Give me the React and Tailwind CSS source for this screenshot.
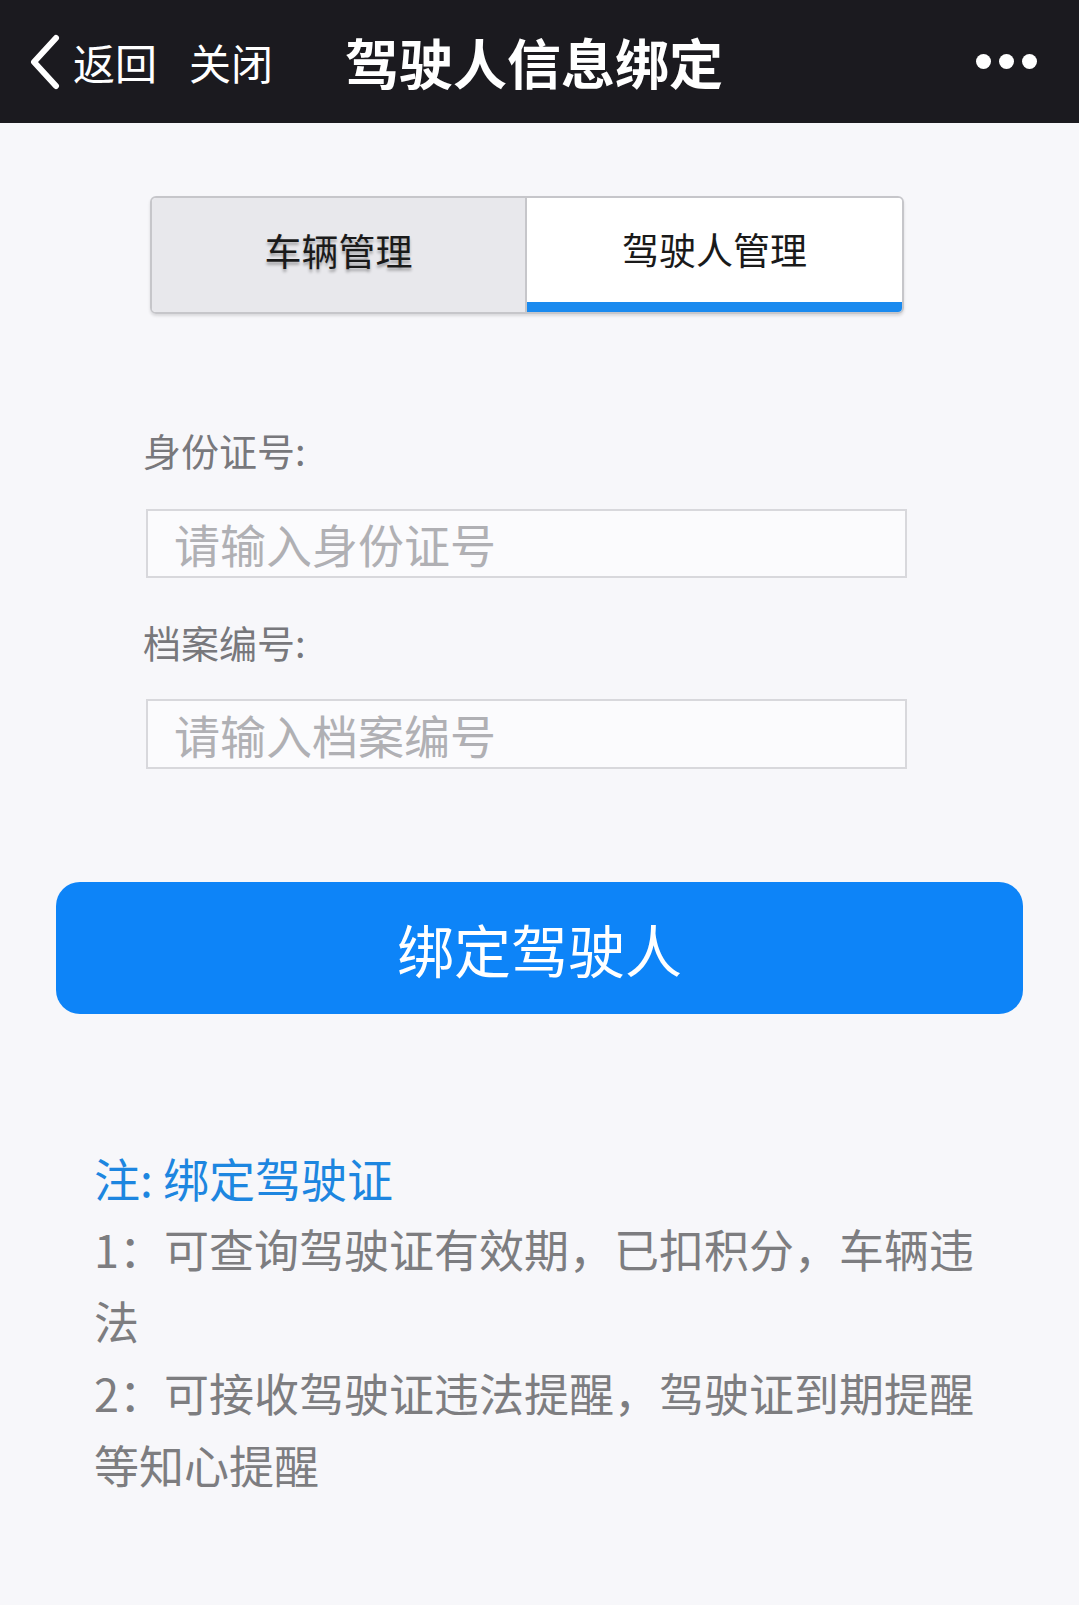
import React, { useState } from "react";

const font = { fontFamily: '"Noto Sans CJK SC", "Noto Sans", sans-serif' };

function Header() {
  return (
    <header className="h-[123px] bg-[#1b1a1f] flex items-center text-white">
      <svg width="36" height="56" viewBox="0 0 36 56" className="ml-[26px]">
        <polyline points="30,4 8,28 30,52" fill="none" stroke="#fff" strokeWidth="6" strokeLinecap="round" strokeLinejoin="round" />
      </svg>
      <span className="ml-[11px] text-[42px] leading-none">返回</span>
      <span className="ml-[32px] text-[42px] leading-none">关闭</span>
      <h1 className="ml-[72px] text-[54px] font-bold leading-none">驾驶人信息绑定</h1>
      <div className="ml-auto mr-[42px] flex gap-[8px]">
        <span className="w-[15px] h-[15px] rounded-full bg-white" />
        <span className="w-[15px] h-[15px] rounded-full bg-white" />
        <span className="w-[15px] h-[15px] rounded-full bg-white" />
      </div>
    </header>
  );
}

function Tabs() {
  const [tab, setTab] = useState("driver"); // 驾驶人管理 默认选中
  const on = "bg-white border-b-[10px] border-b-[#1a8aef]";
  const off = "bg-[#e8e8ec] pb-[8px] [text-shadow:0_3px_3px_rgba(0,0,0,0.3)]";
  return (
    <div className="ml-[150px] mt-[73px] w-[754px] h-[118px] flex rounded-[6px] border-2 border-[#c6c6ca] overflow-hidden shadow-[0_2px_3px_rgba(0,0,0,0.12)]">
      <button
        onClick={() => setTab("car")}
        className={"w-1/2 h-full flex items-center justify-center text-[37px] text-[#1a1a1a] border-r-2 border-[#c6c6ca] " + (tab === "car" ? on : off)}
      >
        车辆管理
      </button>
      <button
        onClick={() => setTab("driver")}
        className={"w-1/2 h-full flex items-center justify-center text-[37px] text-[#1a1a1a] " + (tab === "driver" ? on : off)}
      >
        驾驶人管理
      </button>
    </div>
  );
}

export default function App() {
  return (
    <div className="min-h-[1605px] bg-[#f7f7fa]" style={font}>
      <Header />
      <Tabs />
      <div className="mt-[117px]">
        <div className="ml-[143px] text-[38px] leading-[38px] text-[#78787c]">身份证号:</div>
        <input
          placeholder="请输入身份证号"
          className="block mt-[40px] ml-[146px] w-[761px] h-[69px] border-2 border-[#d8d8dc] bg-[#fbfbfd] px-[26px] text-[46px] text-[#333] outline-none placeholder:text-[#b0b0b4]"
          style={font}
        />
        <div className="mt-[45px] ml-[143px] text-[38px] leading-[38px] text-[#78787c]">档案编号:</div>
        <input
          placeholder="请输入档案编号"
          className="block mt-[38px] ml-[146px] w-[761px] h-[70px] border-2 border-[#d8d8dc] bg-[#fbfbfd] px-[26px] text-[46px] text-[#333] outline-none placeholder:text-[#b0b0b4]"
          style={font}
        />
      </div>
      <button className="block mt-[113px] ml-[56px] w-[967px] h-[132px] rounded-[24px] bg-[#0d84f8] text-white text-[57px] leading-none">
        绑定驾驶人
      </button>
      <div className="mt-[127px] pl-[94px] pr-[68px] text-[45px] leading-[72px] text-[#7d7d80]">
        <p className="text-[#1d86e0] text-[46px]">注: 绑定驾驶证</p>
        <p>1：可查询驾驶证有效期，已扣积分，车辆违法</p>
        <p>2：可接收驾驶证违法提醒，驾驶证到期提醒等知心提醒</p>
      </div>
    </div>
  );
}
